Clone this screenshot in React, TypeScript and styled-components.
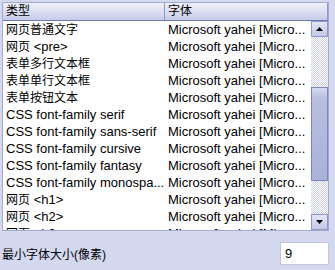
import React from "react";
import styled, { createGlobalStyle } from "styled-components";

const GlobalStyle = createGlobalStyle`
  html, body {
    margin: 0;
    padding: 0;
  }
  body {
    background: #d5d9ef;
    font-family: "Liberation Sans", "Noto Sans CJK SC", sans-serif;
    font-size: 13px;
    color: #000;
  }
`;

const Page = styled.div`
  width: 335px;
  height: 270px;
  box-sizing: border-box;
  padding: 2px 6px 0 2px;
  display: flex;
  flex-direction: column;
`;

const ListBox = styled.div`
  height: 229px;
  box-sizing: border-box;
  border: 1px solid #a3aad0;
  background: #fff;
  display: flex;
  flex-direction: column;
  overflow: hidden;
`;

const Header = styled.div`
  display: grid;
  grid-template-columns: 162px 1fr;
  height: 18px;
  box-sizing: border-box;
  background: linear-gradient(#eef0f9, #c7cce8);
  border-bottom: 1px solid #6e7ab4;
`;

const HeaderCell = styled.div`
  padding-left: 3px;
  line-height: 17px;
  font-size: 12px;
  border-right: 1px solid #8e97c6;
`;

const Body = styled.div`
  flex: 1;
  min-height: 0;
  display: flex;
`;

const Rows = styled.div`
  flex: 1;
  overflow: hidden;
`;

const Row = styled.div`
  display: grid;
  grid-template-columns: 162px 1fr;
  height: 17px;
  line-height: 17px;
  white-space: nowrap;
`;

const Cell = styled.div`
  padding-left: 3px;
  overflow: hidden;
`;

const Han = styled.span`
  font-size: 12px;
`;

const Scrollbar = styled.div`
  width: 17px;
  display: flex;
  flex-direction: column;
`;

const ArrowButton = styled.div`
  height: 16px;
  box-sizing: border-box;
  border: 1px solid #8f98c8;
  background: linear-gradient(#e3e6f5, #c3c8e6);
  display: flex;
  align-items: center;
  justify-content: center;
`;

const Track = styled.div<{ $before: number }>`
  flex: 1;
  display: flex;
  flex-direction: column;
  padding-top: ${(p) => p.$before}px;
  background-color: #fff;
  background-image: repeating-conic-gradient(#cfd2e4 0% 25%, #fff 0% 50%);
  background-size: 2px 2px;
`;

const Thumb = styled.div<{ $size: number }>`
  height: ${(p) => p.$size}px;
  box-sizing: border-box;
  border: 1px solid #7c87bf;
  background: linear-gradient(#d6daf0 0px, #b8bfe0 10px, #aab2d8 100%);
`;

const Bottom = styled.div`
  flex: 1;
  display: flex;
  align-items: center;
  justify-content: space-between;
  padding-top: 6px;
`;

const Label = styled.div`
  font-size: 12px;
`;

const SizeInput = styled.input`
  width: 49px;
  height: 23px;
  box-sizing: border-box;
  border: 1px solid #bfc5e0;
  background: #fff;
  padding: 0 0 0 4px;
  margin: 0;
  font-family: "Liberation Sans", sans-serif;
  font-size: 13px;
  color: #000;
  outline: none;
`;

const rows: [string, string][] = [
  ["网页普通文字", "Microsoft yahei [Micro..."],
  ["网页 <pre>", "Microsoft yahei [Micro..."],
  ["表单多行文本框", "Microsoft yahei [Micro..."],
  ["表单单行文本框", "Microsoft yahei [Micro..."],
  ["表单按钮文本", "Microsoft yahei [Micro..."],
  ["CSS font-family serif", "Microsoft yahei [Micro..."],
  ["CSS font-family sans-serif", "Microsoft yahei [Micro..."],
  ["CSS font-family cursive", "Microsoft yahei [Micro..."],
  ["CSS font-family fantasy", "Microsoft yahei [Micro..."],
  ["CSS font-family monospa...", "Microsoft yahei [Micro..."],
  ["网页 <h1>", "Microsoft yahei [Micro..."],
  ["网页 <h2>", "Microsoft yahei [Micro..."],
  ["网页 <h3>", "Microsoft yahei [Micro..."],
];

// Chinese runs are drawn a bit smaller than the latin text, as in the dialog
const mixed = (text: string) =>
  text.split(/([\u4e00-\u9fff]+)/).map((part, i) =>
    /[\u4e00-\u9fff]/.test(part) ? <Han key={i}>{part}</Han> : part
  );

const Arrow = ({ up }: { up?: boolean }) => (
  <svg width="7" height="4" viewBox="0 0 7 4">
    <polygon points={up ? "0,4 7,4 3.5,0" : "0,0 7,0 3.5,4"} fill="#000" />
  </svg>
);

export default function App() {
  return (
    <Page>
      <GlobalStyle />
      <ListBox>
        <Header>
          <HeaderCell>类型</HeaderCell>
          <HeaderCell>字体</HeaderCell>
        </Header>
        <Body>
          <Rows>
            {rows.map(([kind, font], i) => (
              <Row key={i}>
                <Cell>{mixed(kind)}</Cell>
                <Cell>{font}</Cell>
              </Row>
            ))}
          </Rows>
          <Scrollbar>
            <ArrowButton>
              <Arrow up />
            </ArrowButton>
            <Track $before={50}>
              <Thumb $size={94} />
            </Track>
            <ArrowButton>
              <Arrow />
            </ArrowButton>
          </Scrollbar>
        </Body>
      </ListBox>
      <Bottom>
        <Label>最小字体大小(像素)</Label>
        <SizeInput defaultValue="9" />
      </Bottom>
    </Page>
  );
}
